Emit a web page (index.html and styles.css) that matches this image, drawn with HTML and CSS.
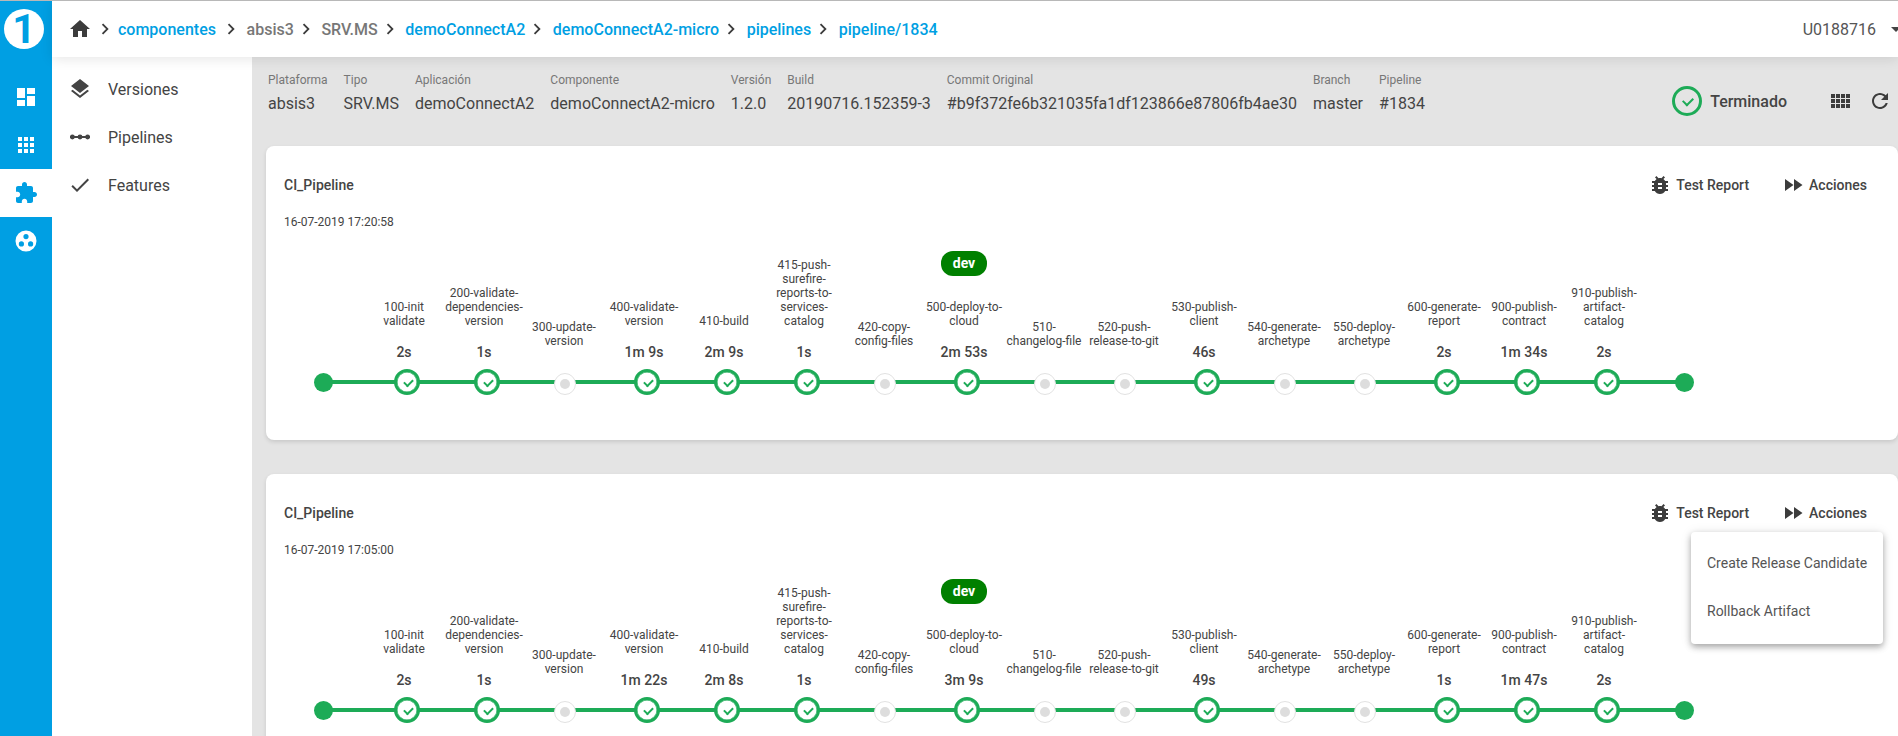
FILE: index.html
```html
<!DOCTYPE html>
<html lang="en">
<head>
<meta charset="UTF-8">
<meta name="viewport" content="width=device-width, initial-scale=1.0">
<title>Pipeline 1834</title>
<link rel="stylesheet" href="styles.css">
</head>
<body>
<svg class="sprites" xmlns="http://www.w3.org/2000/svg">
  <symbol id="i-home" viewBox="0 0 24 24"><path d="M10 20v-6h4v6h5v-8h3L12 3 2 12h3v8z"/></symbol>
  <symbol id="i-chev" viewBox="0 0 24 24"><path d="M10 6L8.59 7.41 13.17 12l-4.58 4.59L10 18l6-6z"/></symbol>
  <symbol id="i-bug" viewBox="0 0 24 24"><path d="M20 8h-2.81c-.45-.78-1.07-1.45-1.82-1.96L17 4.41 15.59 3l-2.17 2.17C12.96 5.06 12.49 5 12 5c-.49 0-.96.06-1.41.17L8.41 3 7 4.41l1.62 1.63C7.88 6.55 7.26 7.22 6.81 8H4v2h2.09c-.05.33-.09.66-.09 1v1H4v2h2v1c0 .34.04.67.09 1H4v2h2.81c1.04 1.79 2.97 3 5.19 3s4.15-1.21 5.19-3H20v-2h-2.09c.05-.33.09-.66.09-1v-1h2v-2h-2v-1c0-.34-.04-.67-.09-1H20V8zm-6 8h-4v-2h4v2zm0-4h-4v-2h4v2z"/></symbol>
  <symbol id="i-ff" viewBox="0 0 24 24"><path d="M4 18l8.5-6L4 6v12zm9-12v12l8.5-6L13 6z"/></symbol>
</svg>

<div class="shell">
  <aside class="rail">
    <div class="logo"><span class="logo-one">1</span></div>
    <a class="rail-item"><svg viewBox="0 0 24 24"><path d="M3 13h8V3H3v10zm0 8h8v-6H3v6zm10 0h8V11h-8v10zm0-18v6h8V3h-8z"/></svg></a>
    <a class="rail-item"><svg viewBox="0 0 24 24"><path d="M4 8h4V4H4v4zm6 12h4v-4h-4v4zm-6 0h4v-4H4v4zm0-6h4v-4H4v4zm6 0h4v-4h-4v4zm6-10v4h4V4h-4zm-6 4h4V4h-4v4zm6 6h4v-4h-4v4zm0 6h4v-4h-4v4z"/></svg></a>
    <a class="rail-item active"><svg viewBox="0 0 24 24"><path d="M20.5 11H19V7c0-1.1-.9-2-2-2h-4V3.5C13 2.12 11.88 1 10.5 1S8 2.12 8 3.5V5H4c-1.1 0-1.99.9-1.99 2v3.8H3.5c1.49 0 2.7 1.21 2.7 2.7s-1.21 2.7-2.7 2.7H2V20c0 1.1.9 2 2 2h3.8v-1.5c0-1.49 1.21-2.7 2.7-2.7 1.49 0 2.7 1.21 2.7 2.7V22H17c1.1 0 2-.9 2-2v-4h1.5c1.38 0 2.5-1.12 2.5-2.5S21.88 11 20.5 11z"/></svg></a>
    <a class="rail-item"><svg viewBox="0 0 24 24"><path fill-rule="evenodd" d="M12 1.5a10.5 10.5 0 1 0 0 21 10.5 10.5 0 0 0 0-21zM12 5a2.6 2.6 0 1 1 0 5.2A2.6 2.6 0 0 1 12 5zM7.4 12.3a2.6 2.6 0 1 1 0 5.2 2.6 2.6 0 0 1 0-5.2zm9.2 0a2.6 2.6 0 1 1 0 5.2 2.6 2.6 0 0 1 0-5.2z"/></svg></a>
  </aside>

  <div class="page">
    <header class="topbar">
      <svg class="crumb-home"><use href="#i-home"/></svg>
      <svg class="chev"><use href="#i-chev"/></svg>
      <a class="crumb link crumb-root">componentes</a>
      <svg class="chev"><use href="#i-chev"/></svg>
      <span class="crumb">absis3</span>
      <svg class="chev"><use href="#i-chev"/></svg>
      <span class="crumb">SRV.MS</span>
      <svg class="chev"><use href="#i-chev"/></svg>
      <a class="crumb link">demoConnectA2</a>
      <svg class="chev"><use href="#i-chev"/></svg>
      <a class="crumb link">demoConnectA2-micro</a>
      <svg class="chev"><use href="#i-chev"/></svg>
      <a class="crumb link">pipelines</a>
      <svg class="chev"><use href="#i-chev"/></svg>
      <a class="crumb link">pipeline/1834</a>
      <span class="user">U0188716</span>
      <span class="caret"></span>
    </header>

    <div class="body-row">
      <nav class="subnav">
        <a class="subnav-item"><svg viewBox="0 0 24 24"><path d="M11.99 18.54l-7.37-5.73L3 14.07l9 7 9-7-1.63-1.27-7.38 5.74zM12 16l7.36-5.73L21 9l-9-7-9 7 1.63 1.27L12 16z"/></svg>Versiones</a>
        <a class="subnav-item"><svg viewBox="0 0 24 24"><rect x="2" y="11" width="20" height="2"/><circle cx="4.4" cy="12" r="2.4"/><circle cx="12" cy="12" r="2.4"/><circle cx="19.6" cy="12" r="2.4"/></svg>Pipelines</a>
        <a class="subnav-item"><svg viewBox="0 0 24 24"><path d="M9 16.17L4.83 12l-1.42 1.41L9 19 21 7l-1.41-1.41z"/></svg>Features</a>
      </nav>

      <main class="content">
        <section class="info">
          <div class="field"><div class="field-label">Plataforma</div><div class="field-value">absis3</div></div>
          <div class="field"><div class="field-label">Tipo</div><div class="field-value">SRV.MS</div></div>
          <div class="field"><div class="field-label">Aplicación</div><div class="field-value">demoConnectA2</div></div>
          <div class="field"><div class="field-label">Componente</div><div class="field-value">demoConnectA2-micro</div></div>
          <div class="field"><div class="field-label">Versión</div><div class="field-value">1.2.0</div></div>
          <div class="field"><div class="field-label">Build</div><div class="field-value">20190716.152359-3</div></div>
          <div class="field"><div class="field-label">Commit Original</div><div class="field-value">#b9f372fe6b321035fa1df123866e87806fb4ae30</div></div>
          <div class="field"><div class="field-label">Branch</div><div class="field-value">master</div></div>
          <div class="field"><div class="field-label">Pipeline</div><div class="field-value">#1834</div></div>
          <div class="status">
            <span class="status-ring"></span>
            <span class="status-text">Terminado</span>
            <svg class="tool tool-grid" viewBox="0 0 24 24"><path d="M3 9h4V5H3v4zm0 5h4v-4H3v4zm5 0h4v-4H8v4zm5 0h4v-4h-4v4zM8 9h4V5H8v4zm5-4v4h4V5h-4zm5 9h4v-4h-4v4zM3 19h4v-4H3v4zm5 0h4v-4H8v4zm5 0h4v-4h-4v4zm5 0h4v-4h-4v4zm0-14v4h4V5h-4z"/></svg>
            <svg class="tool" viewBox="0 0 24 24"><path d="M17.65 6.35C16.2 4.9 14.21 4 12 4c-4.42 0-7.99 3.58-7.99 8s3.57 8 7.99 8c3.73 0 6.84-2.55 7.73-6h-2.08c-.82 2.33-3.04 4-5.65 4-3.31 0-6-2.69-6-6s2.69-6 6-6c1.66 0 3.14.69 4.22 1.78L13 11h7V4l-2.35 2.35z"/></svg>
          </div>
        </section>

        <section class="card">
          <div class="card-head">
            <div class="card-title">CI_Pipeline</div>
            <a class="action"><svg><use href="#i-bug"/></svg>Test Report</a>
            <a class="action"><svg><use href="#i-ff"/></svg>Acciones</a>
          </div>
          <div class="card-date">16-07-2019 17:20:58</div>
          <div class="pipeline">
            <span class="end-dot start"></span>
            <div class="step"><div class="step-label">100-init validate</div><div class="step-time">2s</div><div class="node done"></div></div>
            <div class="step"><div class="step-label">200-validate-dependencies-version</div><div class="step-time">1s</div><div class="node done"></div></div>
            <div class="step"><div class="step-label">300-update-version</div><div class="step-time"></div><div class="node"></div></div>
            <div class="step"><div class="step-label">400-validate-version</div><div class="step-time">1m 9s</div><div class="node done"></div></div>
            <div class="step"><div class="step-label">410-build</div><div class="step-time">2m 9s</div><div class="node done"></div></div>
            <div class="step"><div class="step-label">415-push-surefire-reports-to-services-catalog</div><div class="step-time">1s</div><div class="node done"></div></div>
            <div class="step"><div class="step-label">420-copy-config-files</div><div class="step-time"></div><div class="node"></div></div>
            <div class="step"><span class="env-badge">dev</span><div class="step-label">500-deploy-to-cloud</div><div class="step-time">2m 53s</div><div class="node done"></div></div>
            <div class="step"><div class="step-label">510-changelog-file</div><div class="step-time"></div><div class="node"></div></div>
            <div class="step"><div class="step-label">520-push-release-to-git</div><div class="step-time"></div><div class="node"></div></div>
            <div class="step"><div class="step-label">530-publish-client</div><div class="step-time">46s</div><div class="node done"></div></div>
            <div class="step"><div class="step-label">540-generate-archetype</div><div class="step-time"></div><div class="node"></div></div>
            <div class="step"><div class="step-label">550-deploy-archetype</div><div class="step-time"></div><div class="node"></div></div>
            <div class="step"><div class="step-label">600-generate-report</div><div class="step-time">2s</div><div class="node done"></div></div>
            <div class="step"><div class="step-label">900-publish-contract</div><div class="step-time">1m 34s</div><div class="node done"></div></div>
            <div class="step"><div class="step-label">910-publish-artifact-catalog</div><div class="step-time">2s</div><div class="node done"></div></div>
            <span class="end-dot finish"></span>
          </div>
        </section>

        <section class="card">
          <div class="card-head">
            <div class="card-title">CI_Pipeline</div>
            <a class="action"><svg><use href="#i-bug"/></svg>Test Report</a>
            <a class="action"><svg><use href="#i-ff"/></svg>Acciones</a>
          </div>
          <div class="card-date">16-07-2019 17:05:00</div>
          <div class="pipeline">
            <span class="end-dot start"></span>
            <div class="step"><div class="step-label">100-init validate</div><div class="step-time">2s</div><div class="node done"></div></div>
            <div class="step"><div class="step-label">200-validate-dependencies-version</div><div class="step-time">1s</div><div class="node done"></div></div>
            <div class="step"><div class="step-label">300-update-version</div><div class="step-time"></div><div class="node"></div></div>
            <div class="step"><div class="step-label">400-validate-version</div><div class="step-time">1m 22s</div><div class="node done"></div></div>
            <div class="step"><div class="step-label">410-build</div><div class="step-time">2m 8s</div><div class="node done"></div></div>
            <div class="step"><div class="step-label">415-push-surefire-reports-to-services-catalog</div><div class="step-time">1s</div><div class="node done"></div></div>
            <div class="step"><div class="step-label">420-copy-config-files</div><div class="step-time"></div><div class="node"></div></div>
            <div class="step"><span class="env-badge">dev</span><div class="step-label">500-deploy-to-cloud</div><div class="step-time">3m 9s</div><div class="node done"></div></div>
            <div class="step"><div class="step-label">510-changelog-file</div><div class="step-time"></div><div class="node"></div></div>
            <div class="step"><div class="step-label">520-push-release-to-git</div><div class="step-time"></div><div class="node"></div></div>
            <div class="step"><div class="step-label">530-publish-client</div><div class="step-time">49s</div><div class="node done"></div></div>
            <div class="step"><div class="step-label">540-generate-archetype</div><div class="step-time"></div><div class="node"></div></div>
            <div class="step"><div class="step-label">550-deploy-archetype</div><div class="step-time"></div><div class="node"></div></div>
            <div class="step"><div class="step-label">600-generate-report</div><div class="step-time">1s</div><div class="node done"></div></div>
            <div class="step"><div class="step-label">900-publish-contract</div><div class="step-time">1m 47s</div><div class="node done"></div></div>
            <div class="step"><div class="step-label">910-publish-artifact-catalog</div><div class="step-time">2s</div><div class="node done"></div></div>
            <span class="end-dot finish"></span>
          </div>
          <div class="menu">
            <a class="menu-item">Create Release Candidate</a>
            <a class="menu-item">Rollback Artifact</a>
          </div>
        </section>
      </main>
    </div>
  </div>
</div>
</body>
</html>
```
FILE: styles.css
```css
* {
  box-sizing: border-box;
}
html, body {
  height: 100%;
}
body {
  margin: 0;
  overflow: hidden;
  border-top: 1px solid #b8b8b8;
  font-family: Roboto, "Liberation Sans", sans-serif;
  color: #444;
  background-color: #fff;
}
svg {
  fill: currentColor;
}
.sprites {
  display: none;
}
.shell {
  display: flex;
  height: 100%;
}

/* left blue rail */
.rail {
  flex: 0 0 52px;
  background-color: #009fe3;
  color: #fff;
}
.logo {
  height: 72px;
  padding: 8px 4px 0;
}
.logo-one {
  display: block;
  width: 40px;
  height: 40px;
  border-radius: 50%;
  background-color: #fff;
  color: #009fe3;
  font-size: 41px;
  font-weight: 700;
  line-height: 41px;
  text-align: center;
}
.rail-item {
  display: flex;
  align-items: center;
  justify-content: center;
  height: 48px;
}
.rail-item svg {
  width: 24px;
  height: 24px;
}
.rail-item.active {
  background-color: #fff;
  color: #009fe3;
}

.page {
  flex: 1;
  min-width: 0;
  display: flex;
  flex-direction: column;
}

/* top breadcrumb bar */
.topbar {
  position: relative;
  z-index: 2;
  flex: 0 0 56px;
  display: flex;
  align-items: center;
  padding-left: 16px;
  background-color: #fff;
  box-shadow: 0 2px 12px rgba(0, 0, 0, 0.1);
}
.crumb-home {
  width: 24px;
  height: 24px;
  color: #3c3c3c;
}
.chev {
  width: 22px;
  height: 22px;
  margin: 0 4.6px 0 1px;
  color: #3c3c3c;
}
.crumb-home + .chev {
  margin: 0 2px;
}
.crumb {
  font-size: 16px;
  font-weight: 500;
  color: #777;
}
.crumb.link {
  color: #009fe3;
}
.crumb-root {
  margin-right: 3px;
}
.user {
  margin-left: auto;
  font-size: 16px;
  color: #555;
}
.caret {
  width: 0;
  height: 0;
  margin: 0 -3px 0 15px;
  border-left: 5px solid transparent;
  border-right: 5px solid transparent;
  border-top: 5px solid #444;
}

.body-row {
  flex: 1;
  min-height: 0;
  display: flex;
}

/* second level menu */
.subnav {
  flex: 0 0 200px;
  padding: 8px 0 0 16px;
  background-color: #fff;
}
.subnav-item {
  display: flex;
  align-items: center;
  gap: 16px;
  height: 48px;
  font-size: 16px;
  color: #444;
}
.subnav-item svg {
  width: 24px;
  height: 24px;
}

.content {
  flex: 1;
  min-width: 0;
  overflow: hidden;
  padding-left: 14px;
  background-color: #e4e4e4;
}

/* info row */
.info {
  display: flex;
  gap: 16px;
  height: 89px;
  padding: 15px 6px 0 2px;
}
.field-label {
  font-size: 12px;
  line-height: 16px;
  color: #777;
}
.field-value {
  margin-top: 6px;
  font-size: 16px;
  line-height: 20px;
  color: #444;
  white-space: nowrap;
}
.status {
  display: flex;
  align-items: center;
  gap: 8px;
  height: 30px;
  margin: 14px 0 0 auto;
}
.status-ring {
  position: relative;
  width: 30px;
  height: 30px;
  border: 3px solid #1dab57;
  border-radius: 50%;
}
.status-ring::after {
  content: "";
  position: absolute;
  left: 8px;
  top: 8px;
  width: 8px;
  height: 5px;
  border-left: 2px solid #1dab57;
  border-bottom: 2px solid #1dab57;
  transform: rotate(-45deg);
}
.status-text {
  font-size: 16px;
  font-weight: 500;
  color: #444;
}
.tool {
  width: 24px;
  height: 24px;
  margin-left: 8px;
  color: #3c3c3c;
}
.tool-grid {
  margin-left: 33px;
}

/* pipeline card */
.card {
  position: relative;
  height: 294px;
  margin-bottom: 34px;
  padding: 27px 31px 45px 18px;
  border-radius: 8px;
  background-color: #fff;
  box-shadow: 0 2px 4px rgba(0, 0, 0, 0.12);
}
.card-head {
  display: flex;
  align-items: center;
  gap: 32px;
  height: 24px;
}
.card-title {
  margin-right: auto;
  font-size: 14px;
  font-weight: 500;
}
.action {
  display: flex;
  align-items: center;
  gap: 4px;
  font-size: 14px;
  font-weight: 500;
}
.action svg {
  width: 24px;
  height: 24px;
  color: #3c3c3c;
}
.card-date {
  margin-top: 17px;
  font-size: 12px;
  line-height: 16px;
}

.pipeline {
  position: relative;
  display: flex;
  align-items: flex-end;
  width: 1379px;
  height: 144px;
  margin: 21px 0 0 30px;
}
.pipeline::before {
  content: "";
  position: absolute;
  left: 9px;
  right: 9px;
  bottom: 11px;
  height: 4px;
  background-color: #1dab57;
}
.end-dot {
  position: relative;
  flex: 0 0 19px;
  height: 19px;
  margin-bottom: 3px;
  border-radius: 50%;
  background-color: #1dab57;
}
.end-dot.start {
  margin-right: 31px;
}
.end-dot.finish {
  margin-left: 31px;
}
.step {
  flex: 0 0 80px;
  display: flex;
  flex-direction: column;
}
.env-badge {
  align-self: center;
  width: 46px;
  height: 25px;
  margin-bottom: 24px;
  border-radius: 12px;
  background-color: #008000;
  color: #fff;
  font-size: 14px;
  font-weight: 700;
  line-height: 25px;
  text-align: center;
}
.step-label {
  margin-bottom: 14px;
  font-size: 12px;
  line-height: 14px;
  text-align: center;
  color: #444;
}
.step-time {
  margin-bottom: 7px;
  font-size: 14px;
  font-weight: 500;
  line-height: 20px;
  text-align: center;
}
/* skipped steps have a shorter node, no time above it */
.step-time:empty {
  margin-bottom: 11px;
}
.node {
  position: relative;
  z-index: 1;
  width: 22px;
  height: 22px;
  margin-left: 30px;
  border: 1px solid #e2e2e2;
  border-radius: 50%;
  background-color: #fff;
}
.node::after {
  content: "";
  position: absolute;
  left: 5px;
  top: 5px;
  width: 10px;
  height: 10px;
  border-radius: 50%;
  background-color: #ddd;
}
.node.done {
  width: 26px;
  height: 26px;
  border: 3px solid #1dab57;
  box-shadow: inset 0 0 0 0.5px #1dab57;
}
.node.done::after {
  left: 6.5px;
  top: 6.5px;
  width: 7px;
  height: 4px;
  border-radius: 0;
  border-left: 2px solid #1dab57;
  border-bottom: 2px solid #1dab57;
  background-color: transparent;
  transform: rotate(-45deg);
}

/* actions dropdown */
.menu {
  position: absolute;
  z-index: 3;
  top: 58px;
  right: 15px;
  width: 192px;
  padding: 7px 0 9px;
  border-radius: 4px;
  background-color: #fff;
  box-shadow: 0 3px 6px rgba(0, 0, 0, 0.3), 0 1px 12px rgba(0, 0, 0, 0.1);
}
.menu-item {
  display: block;
  padding-left: 16px;
  font-size: 14px;
  line-height: 48px;
  color: #555;
  white-space: nowrap;
}
```
